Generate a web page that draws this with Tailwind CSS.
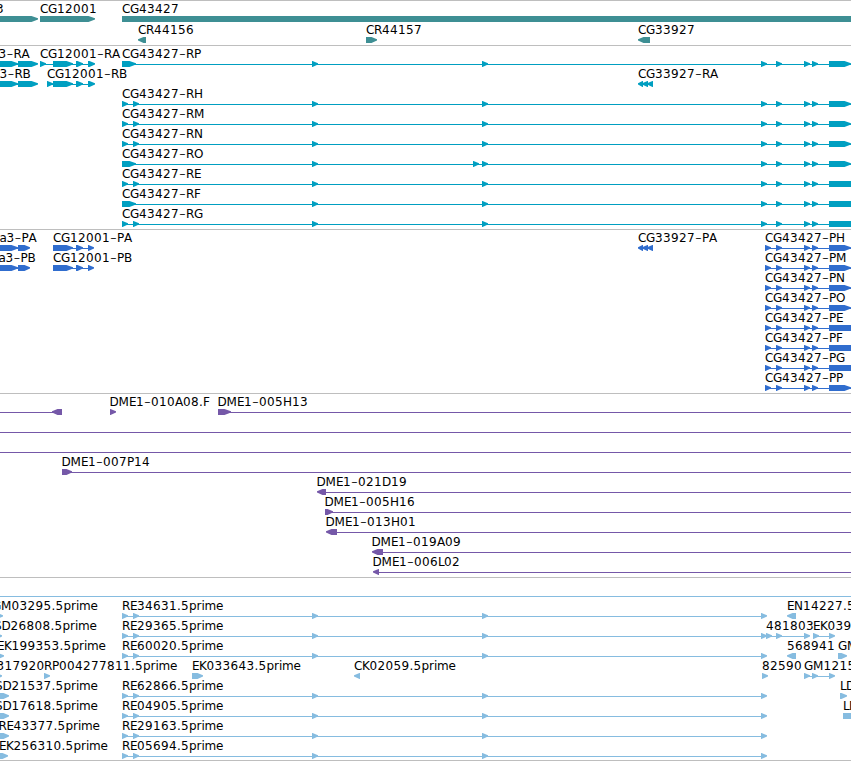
<!DOCTYPE html>
<html lang="en">
<head>
<meta charset="utf-8">
<title>Genome region</title>
<script src="https://cdn.jsdelivr.net/npm/@tailwindcss/browser@4"></script>
</head>
<body class="bg-white overflow-hidden">
<main class="flex flex-col w-[851px] h-[761px] overflow-hidden text-black font-['DejaVu_Sans',sans-serif]">
  <section id="genes" class="h-[45px] shrink-0 border-t border-[#bebebe] text-[#3e8f94]"></section>
  <section id="transcripts" class="h-[184px] shrink-0 border-t border-[#bebebe] text-[#009fc1]"></section>
  <section id="proteins" class="h-[164px] shrink-0 border-t border-[#bebebe] text-[#306dce]"></section>
  <section id="clones" class="h-[184px] shrink-0 border-t border-[#bebebe] text-[#7558a8]"></section>
  <section id="ests" class="h-[183px] shrink-0 border-t border-[#bebebe] text-[#86bce0]"></section>
  <div class="h-px shrink-0 bg-[#bebebe]"></div>
</main>
<script>
// Advances of the label characters, in pixels.
const ADV = {C:8,G:9,R:8,P:7,D:9,M:10.5,E:7,H:9,K:7.5,L:6,N:9,O:9,B:8,A:8,F:7,S:7.5,I:4,'-':7,'.':4,p:7.6,r:4.8,i:3.2,m:11.3,e:7.6,a:7};
const adv = c => ADV[c] || 8;
const width = s => [...s].reduce((t, c) => t + adv(c), 0);

function label(s, x, y) {
  let out = '', pos = x;
  for (const c of s) {
    out += c === '-'
      ? `<tspan x="${pos - 0.1}" y="${y + 1.7}" font-size="19" font-weight="200">-</tspan>`
      : `<tspan x="${pos}" y="${y}">${c}</tspan>`;
    pos += adv(c);
  }
  return `<text fill="#000" font-size="12">${out}</text>`;
}

// Feature block: '>' and '<' give the strand, '=' a plain block.
function block(a, b, dir, y) {
  const t = y - 3, m = y, e = y + 3;
  if (dir === '=') return `<rect x="${a}" y="${t}" width="${b - a}" height="6"/>`;
  const h = Math.min(b - a, b - a > 12 ? 7 : 6);
  return dir === '>'
    ? `<polygon points="${a},${t} ${b - h + .5},${t} ${b},${m - .7} ${b},${m + .5} ${b - h + .5},${e} ${a},${e}"/>`
    : `<polygon points="${b},${t} ${a + h - .5},${t} ${a},${m - .7} ${a},${m + .5} ${a + h - .5},${e} ${b},${e}"/>`;
}

// row: { y, labels: [[text, x]], ends: [[text, right]], lines: [[a, b]], f: [[a, b, dir]] }
function track(id, top, height, rows) {
  let g = '';
  for (const r of rows) {
    for (const [a, b] of r.lines || []) g += `<rect x="${a}" y="${r.y}" width="${b - a}" height="1"/>`;
    for (const [a, b, d] of r.f || []) g += block(a, b, d || '>', r.y);
    for (const [s, x] of r.labels || []) g += label(s, x, r.y - 6);
    for (const [s, x] of r.ends || []) g += label(s, x - width(s), r.y - 6);
  }
  document.getElementById(id).innerHTML =
    `<svg class="block" width="851" height="${height}" viewBox="0 ${top} 851 ${height}" fill="currentColor">${g}</svg>`;
}

track('genes', 1, 44, [
  {y:19, ends:[['3',4]], labels:[['CG12001',40],['CG43427',122]], f:[[-20,38],[40,95],[122,851,'=']]},
  {y:40, labels:[['CR44156',138],['CR44157',366],['CG33927',638]], f:[[138,146,'<'],[366,377],[638,650,'<']]}
]);

const tail = h => [[761,767],[776,782],[804,810],[812,818],[829,851,h ? '>' : '=']];
const mid = [[312,318],[482,488]];
const open = [[122,128],[133,139]];
const rna = (n, y, start, head, extra = []) =>
  ({y, labels:[['CG43427-' + n,122]], lines:[[122,851]], f:[...start, ...extra, ...mid, ...tail(head)]});
const left = [[-20,18],[18,38]];
const tRP = rna('RP', 64, [[122,136]], true);
tRP.ends = [['3-RA',29.5]];
tRP.labels.push(['CG12001-RA',40]);
tRP.lines.push([0,36],[40,93]);
tRP.f.push(...left, [40,46],[53,73],[76,83],[88,95]);
track('transcripts', 46, 183, [
  tRP,
  {y:84, ends:[['3-RB',30.5]], labels:[['CG12001-RB',47],['CG33927-RA',638]], lines:[[0,36],[47,93]],
   f:[...left,[47,53],[53,73],[76,83],[88,95],[638,643,'<'],[642,648,'<'],[647,653,'<']]},
  rna('RH',104,open,true), rna('RM',124,open,true), rna('RN',144,open,true),
  rna('RO',164,[[122,136]],true,[[473,479]]),
  rna('RE',184,open,false), rna('RF',204,[[122,136]],false), rna('RG',224,open,false)
]);

const prot = ['PH','PM','PN','PO','PE','PF','PG','PP'].map((n, i) => ({
  y: 248 + i * 20, labels:[['CG43427-' + n,765]], ends:[], lines:[[765,851]],
  f:[[765,771],[776,782],[804,810],[812,818],[829,851,/PE|PF|PG/.test(n) ? '=' : '>']]
}));
['PA','PB'].forEach((n, i) => {
  prot[i].ends.push(['a3-' + n, 36.5 - i]);
  prot[i].labels.push(['CG12001-' + n, 53]);
  prot[i].lines.push([0,27],[53,91]);
  prot[i].f.push([-20,18],[18,30],[53,73],[76,83],[88,94]);
});
prot[0].labels.push(['CG33927-PA',638]);
prot[0].f.push([638,643,'<'],[642,648,'<'],[647,653,'<']);
track('proteins', 230, 163, prot);

track('clones', 394, 183, [
  {y:412, labels:[['DME1-010A08.F',109.5],['DME1-005H13',217.5]], lines:[[0,54],[218,851]], f:[[52,62,'<'],[110,116],[218,231]]},
  {y:432, lines:[[0,851]]},
  {y:452, lines:[[0,851]]},
  {y:472, labels:[['DME1-007P14',61.5]], lines:[[62,851]], f:[[62,72]]},
  {y:492, labels:[['DME1-021D19',316.5]], lines:[[319,851]], f:[[317,326,'<']]},
  {y:512, labels:[['DME1-005H16',324.5]], lines:[[325,851]], f:[[325,333]]},
  {y:532, labels:[['DME1-013H01',325.5]], lines:[[328,851]], f:[[326,337,'<']]},
  {y:552, labels:[['DME1-019A09',371.5]], lines:[[374,851]], f:[[372,383,'<']]},
  {y:572, labels:[['DME1-006L02',372.5]], lines:[[375,851]], f:[[373,379,'<']]}
]);

const est = (y, leftName, right, tip, name, labels = [], f = [], lines = []) => ({
  y, ends:[[leftName + '.5prime', right]],
  labels:[[name + '.5prime',122], ...labels],
  lines:[[122,765], ...lines],
  f:[[tip - 10, tip], ...open, ...mid, [761,767], ...f]
});
track('ests', 578, 182, [
  {y:596, lines:[[0,851]]},
  est(616,'GM03295',98,3,'RE34631',[['EN14227.5',787]],[[787,796,'<']]),
  est(636,'SD26808',97,2,'RE29365',[['481803',766],['EK039',813]],[[766,772],[776,782],[804,810],[813,819],[829,835]],[[765,807],[813,832]]),
  est(656,'EK199353',106,4,'RE60020',[['568941',787],['GM',838]],[[787,796,'<'],[838,847]]),
  {y:676, ends:[['317920',44.5]], labels:[['RP004277811.5prime',44],['EK033643.5prime',192],['CK02059.5prime',354],['82590',762],['GM1215',804]],
   lines:[[804,832]], f:[[-8,2],[44,50],[192,203],[354,360,'<'],[762,768],[804,810],[812,818],[829,835]]},
  est(696,'SD21537',98,9,'RE62866',[['LD',840]],[[840,847]]),
  est(716,'SD17618',98,9,'RE04905',[['LD',843]],[[843,851,'=']]),
  est(736,'RE43377',100,9,'RE29163'),
  est(756,'EK256310',108,8,'RE05694')
]);
</script>
</body>
</html>
